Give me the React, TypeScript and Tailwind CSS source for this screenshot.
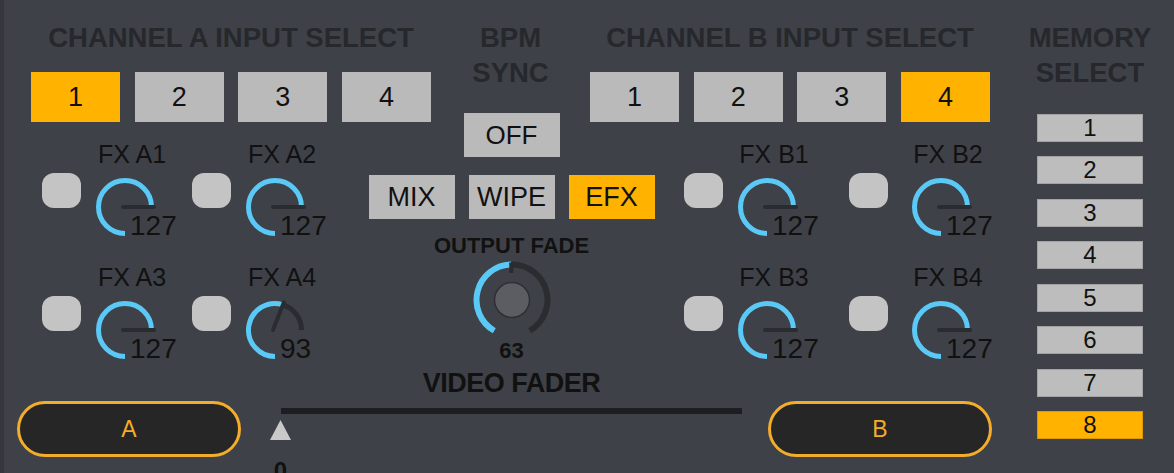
import React from 'react';

const BLUE = '#5bc9f5';
const DARK = '#2a2c30';

function polar(cx: number, cy: number, r: number, deg: number) {
  const a = (deg * Math.PI) / 180;
  return [cx + r * Math.sin(a), cy - r * Math.cos(a)];
}

function arcPath(cx: number, cy: number, r: number, a0: number, a1: number) {
  if (a1 - a0 < 0.5) return '';
  const [x0, y0] = polar(cx, cy, r, a0);
  const [x1, y1] = polar(cx, cy, r, a1);
  const large = a1 - a0 > 180 ? 1 : 0;
  return `M${x0} ${y0} A${r} ${r} 0 ${large} 1 ${x1} ${y1}`;
}

function SelectButton({ label, on }: { label: string; on?: boolean }) {
  return (
    <div
      className={`flex h-[50px] w-[89px] items-center justify-center text-[27px] leading-none text-[#111] ${
        on ? 'bg-[#ffb300]' : 'bg-[#bababa]'
      }`}
    >
      {label}
    </div>
  );
}

function InputSelect({ title, active }: { title: string; active: number }) {
  return (
    <div className="flex w-[400px] flex-col items-center">
      <div className="text-[27.5px] leading-[35px] font-bold text-[#26282c]">{title}</div>
      <div className="mt-[17px] flex gap-[14.67px]">
        {[1, 2, 3, 4].map((n) => (
          <SelectButton key={n} label={String(n)} on={n === active} />
        ))}
      </div>
    </div>
  );
}

function FxCell({ label, value, gapClass = 'ml-px' }: { label: string; value: number; gapClass?: string }) {
  const cx = 43;
  const cy = 40;
  const r = 26.5;
  const theta = 180 + (value / 127) * 270;
  const [nx, ny] = polar(cx, cy, r + 2.5, theta);
  return (
    <div className="flex items-start">
      <div className="mt-[31px] h-[35px] w-[39px] rounded-[12px] bg-[#c4c4c4]" />
      <div className={`flex w-[100px] flex-col ${gapClass}`}>
        <div className="text-center text-[25px] leading-[25px] text-[#111]">{label}</div>
        <div className="relative h-[80px] w-[100px]">
          <svg width="100" height="80" viewBox="0 0 100 80">
            <path d={arcPath(cx, cy, r, 180, theta)} fill="none" stroke={BLUE} strokeWidth="5" />
            <path d={arcPath(cx, cy, r, theta, 450)} fill="none" stroke={DARK} strokeWidth="5" />
            <line x1={cx - 2} y1={cy} x2={nx} y2={ny} stroke={DARK} strokeWidth="4" strokeLinecap="round" />
          </svg>
          <span className="absolute top-[45px] left-[48px] text-[28px] leading-[28px] text-[#111]">{value}</span>
        </div>
      </div>
    </div>
  );
}

function OutputKnob({ value }: { value: number }) {
  const c = 40;
  const r = 35.5;
  const theta = 210 + (value / 127) * 300;
  const [ox, oy] = polar(c, c, 37.5, theta);
  const [ix, iy] = polar(c, c, 27, theta);
  return (
    <svg width="80" height="80" viewBox="0 0 80 80">
      <path d={arcPath(c, c, r, 210, theta)} fill="none" stroke={BLUE} strokeWidth="6" />
      <path d={arcPath(c, c, r, theta, 510)} fill="none" stroke={DARK} strokeWidth="6" />
      <line x1={ox} y1={oy} x2={ix} y2={iy} stroke={DARK} strokeWidth="4" />
      <circle cx={c} cy={c} r="17.5" fill="#5b5d62" stroke="#2e3034" strokeWidth="1.5" />
    </svg>
  );
}

function ModeButton({ label, on }: { label: string; on?: boolean }) {
  return (
    <div
      className={`flex h-[44px] w-[86px] items-center justify-center text-[27px] leading-none text-[#111] ${
        on ? 'bg-[#ffb300]' : 'bg-[#bababa]'
      }`}
    >
      {label}
    </div>
  );
}

function Pill({ label }: { label: string }) {
  return (
    <div className="flex h-[56px] w-[224px] items-center justify-center rounded-full border-[3px] border-[#f4ad2a] bg-[#262626] text-[23px] leading-none text-[#f4ad2a]">
      {label}
    </div>
  );
}

export default function App() {
  return (
    <div className="flex h-[473px] w-[1174px] overflow-hidden bg-[#3e4148] font-['Liberation_Sans',Arial,sans-serif] shadow-[inset_4px_0_0_#35373c]">
      <div className="flex w-[1006px] flex-col">
        {/* headings and input selects */}
        <div className="flex h-[122px] pt-[20px] pl-[31px]">
          <InputSelect title="CHANNEL A INPUT SELECT" active={1} />
          <div className="flex w-[159px] flex-col items-center text-[27.5px] leading-[35px] font-bold text-[#26282c]">
            <div>BPM</div>
            <div>SYNC</div>
          </div>
          <InputSelect title="CHANNEL B INPUT SELECT" active={4} />
        </div>

        {/* fx dials and centre controls */}
        <div className="flex items-start pl-[42px]">
          <div className="flex flex-col gap-[18px] pt-[20px]">
            <div className="flex gap-[10px]">
              <FxCell label="FX A1" value={127} />
              <FxCell label="FX A2" value={127} />
            </div>
            <div className="flex gap-[10px]">
              <FxCell label="FX A3" value={127} />
              <FxCell label="FX A4" value={93} />
            </div>
          </div>

          <div className="ml-[37px] flex w-[285px] flex-col items-center">
            <div className="-mt-[9px] flex h-[44px] w-[96px] items-center justify-center bg-[#bababa] text-[26px] leading-none text-[#111]">
              OFF
            </div>
            <div className="mt-[18px] flex gap-[14px]">
              <ModeButton label="MIX" />
              <ModeButton label="WIPE" />
              <ModeButton label="EFX" on />
            </div>
            <div className="mt-[16px] text-[22px] leading-[22px] font-bold text-[#111]">OUTPUT FADE</div>
            <div className="mt-[3px]">
              <OutputKnob value={63} />
            </div>
            <div className="text-[22px] leading-[22px] font-bold text-[#111]">63</div>
            <div className="mt-[8px] text-[27px] leading-[27px] font-bold tracking-[-0.5px] text-[#111]">
              VIDEO FADER
            </div>
          </div>

          <div className="ml-[30px] flex flex-col gap-[18px] pt-[20px]">
            <div className="flex gap-[25px]">
              <FxCell label="FX B1" value={127} />
              <FxCell label="FX B2" value={127} gapClass="ml-[10px]" />
            </div>
            <div className="flex gap-[25px]">
              <FxCell label="FX B3" value={127} />
              <FxCell label="FX B4" value={127} gapClass="ml-[10px]" />
            </div>
          </div>
        </div>

        {/* crossfader */}
        <div className="mt-[4px] flex items-start pl-[17px]">
          <Pill label="A" />
          <div className="ml-[29px] flex w-[472px] flex-col">
            <div className="mt-[7px] ml-[11px] h-[6px] w-[461px] bg-[#1d1e21]" />
            <svg className="mt-[6px]" width="21" height="20" viewBox="0 0 21 20">
              <polygon points="10.5,0 21,20 0,20" fill="#c9c9c9" />
            </svg>
            <div className="mt-[19px] w-[21px] text-center text-[24px] leading-[24px] font-bold text-[#111]">0</div>
          </div>
          <div className="ml-[26px]">
            <Pill label="B" />
          </div>
        </div>
      </div>

      {/* memory select */}
      <div className="flex flex-1 flex-col items-center pt-[20px]">
        <div className="text-center text-[27.5px] leading-[35px] font-bold text-[#26282c]">
          <div>MEMORY</div>
          <div>SELECT</div>
        </div>
        <div className="mt-[24px] flex flex-col gap-[14.43px]">
          {[1, 2, 3, 4, 5, 6, 7, 8].map((n) => (
            <div
              key={n}
              className={`flex h-[28px] w-[106px] items-center justify-center border text-[24px] leading-none text-[#111] ${
                n === 8 ? 'border-[#d99a00] bg-[#ffb300]' : 'border-[#a3a3a3] bg-[#bdbdbd]'
              }`}
            >
              {n}
            </div>
          ))}
        </div>
      </div>
    </div>
  );
}
